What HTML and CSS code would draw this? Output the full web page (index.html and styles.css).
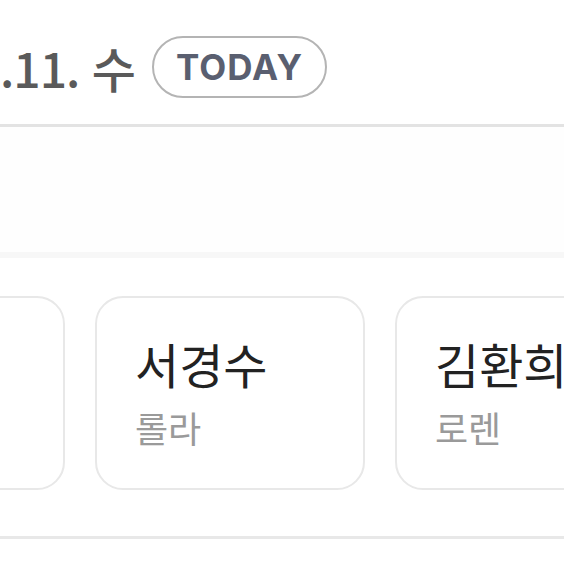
FILE: index.html
```html
<!DOCTYPE html>
<html lang="ko">
<head>
    <meta charset="UTF-8">
    <meta name="viewport" content="width=device-width, initial-scale=1.0">
    <link rel="stylesheet" href="styles.css">
    <title>출석</title>
</head>
<body>
    <header class="date-bar">
        <h2 class="date">.11. 수</h2>
        <span class="today">TODAY</span>
    </header>
    <section class="empty"></section>
    <main class="cards">
        <div class="card"></div>
        <div class="card">
            <div class="name">서경수</div>
            <div class="role">롤라</div>
        </div>
        <div class="card">
            <div class="name">김환희</div>
            <div class="role">로렌</div>
        </div>
    </main>
</body>
</html>
```

FILE: styles.css
```css
body{
    margin: 0;
    background: #fff;
    font-family: "Noto Sans CJK KR", "Noto Sans", sans-serif;
    overflow: hidden;
}
.date-bar{
    display: flex;
    align-items: center;
    gap: 17px;
    height: 127px;
    box-sizing: border-box;
    padding: 10px 0 0 0;
    border-bottom: 3px solid #e3e3e3;
}
.date{
    margin: 0;
    font-size: 48px;
    font-weight: 500;
    color: #5a5a5a;
    letter-spacing: -1px;
}
.today{
    display: inline-flex;
    align-items: center;
    height: 62px;
    box-sizing: border-box;
    padding: 0 22px;
    border: 2px solid #b4b4b4;
    border-radius: 32px;
    font-family: "Inter", "Noto Sans", sans-serif;
    font-size: 35px;
    font-weight: 700;
    color: #5a5f70;
    letter-spacing: 1px;
}
.empty{
    height: 125px;
    background: #fefefe;
    border-bottom: 6px solid #f7f7f7;
}
.cards{
    display: flex;
    gap: 30px;
    padding: 38px 0 46px;
    margin-left: -205px;
    border-bottom: 3px solid #e8e8e8;
}
.card{
    flex: 0 0 270px;
    height: 194px;
    box-sizing: border-box;
    padding: 36px 38px;
    border: 2px solid #e8e8e8;
    border-radius: 28px;
}
.name{
    font-size: 48px;
    line-height: 58px;
    color: #222;
}
.role{
    margin-top: 14px;
    font-size: 36px;
    line-height: 42px;
    color: #9a9a9a;
}
```
